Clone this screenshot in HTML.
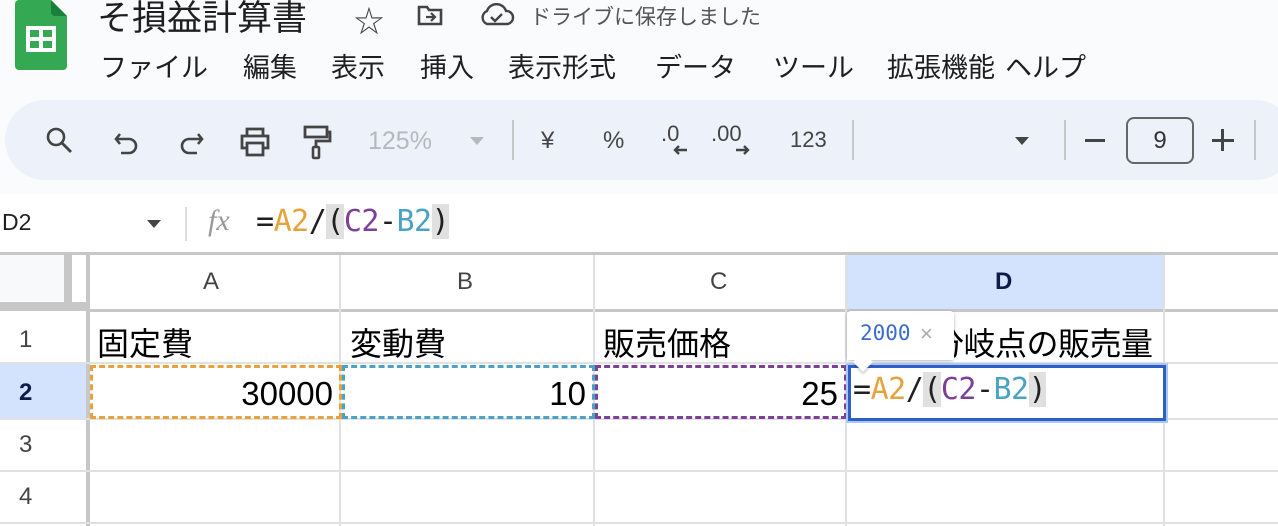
<!DOCTYPE html>
<html><head><meta charset="utf-8"><style>
*{margin:0;padding:0;box-sizing:border-box}
body{width:1278px;height:526px;overflow:hidden;background:#f9fbfd;font-family:"Liberation Sans","Noto Sans CJK JP",sans-serif;position:relative;color:#1f1f1f}
.a{position:absolute;white-space:nowrap}
.mono{font-family:"DejaVu Sans Mono","Liberation Mono",monospace}
.vl{position:absolute;background:#e1e1e1;width:2px}
.hl{position:absolute;background:#e1e1e1;height:2px}
.m{position:absolute;top:46px;font-size:27px;color:#1f1f1f}
.n{position:absolute;top:375px;font-size:33px;color:#000;text-align:right;width:240px}
</style></head><body>
<svg class="a" style="left:14px;top:0" width="54" height="72" viewBox="0 0 54 72">
<path d="M5 0H37L53 16V66a4 4 0 0 1-4 4H5a4 4 0 0 1-4-4V4a4 4 0 0 1 4-4z" fill="#34a853"/>
<path d="M37 0L53 16H41a4 4 0 0 1-4-4z" fill="#188038"/>
<rect x="14" y="28" width="26" height="22" fill="none" stroke="#fff" stroke-width="4"/>
<rect x="14" y="37" width="26" height="4" fill="#fff"/><rect x="25" y="28" width="4" height="22" fill="#fff"/>
</svg>
<div class="a" style="left:97px;top:-10px;font-size:35px;color:#1f1f1f">そ損益計算書</div>
<div class="a" style="left:354px;top:-3px;font-size:30px;color:#444">☆</div>
<svg class="a" style="left:416px;top:3px" width="28" height="24" viewBox="0 0 28 24"><path d="M3 4h8l2 3h12v14H3z" fill="none" stroke="#444" stroke-width="2.6"/><path d="M10 14h9M15 10l4 4-4 4" fill="none" stroke="#444" stroke-width="2.2"/></svg>
<svg class="a" style="left:478px;top:3px" width="38" height="24" viewBox="0 0 38 24"><path d="M9 21a7 7 0 0 1 0-13 10 10 0 0 1 19 0 6.5 6.5 0 0 1 1 13z" fill="none" stroke="#444" stroke-width="2.4"/><path d="M13 14l4 4 7-7" fill="none" stroke="#444" stroke-width="2.4"/></svg>
<div class="a" style="left:530px;top:1px;font-size:21px;color:#555">ドライブに保存しました</div>
<div class="m" style="left:100px">ファイル</div>
<div class="m" style="left:243px">編集</div>
<div class="m" style="left:331px">表示</div>
<div class="m" style="left:420px">挿入</div>
<div class="m" style="left:508px">表示形式</div>
<div class="m" style="left:655px">データ</div>
<div class="m" style="left:773px">ツール</div>
<div class="m" style="left:887px">拡張機能</div>
<div class="m" style="left:1005px">ヘルプ</div>
<div class="a" style="left:5px;top:100px;width:1290px;height:80px;background:#edf2fa;border-radius:40px"></div>
<svg class="a" style="left:44px;top:126px" width="32" height="30" viewBox="0 0 32 30"><circle cx="12" cy="11" r="8" fill="none" stroke="#444" stroke-width="2.6"/><path d="M18 17l9 9" stroke="#444" stroke-width="2.8"/></svg>
<svg class="a" style="left:114px;top:128px" width="28" height="30" viewBox="0 0 28 30"><path d="M6 6L2 11l4 5M2 11h13a7 7 0 0 1 0 14H7" fill="none" stroke="#444" stroke-width="2.6"/></svg>
<svg class="a" style="left:176px;top:128px" width="28" height="30" viewBox="0 0 28 30"><path d="M22 6l4 5-4 5M26 11H13a7 7 0 0 0 0 14h8" fill="none" stroke="#444" stroke-width="2.6"/></svg>
<svg class="a" style="left:238px;top:126px" width="34" height="32" viewBox="0 0 34 32"><path d="M9 10V3h16v7M9 22H4V10h26v12h-5M9 17h16v12H9z" fill="none" stroke="#444" stroke-width="2.8"/></svg>
<svg class="a" style="left:300px;top:124px" width="34" height="36" viewBox="0 0 34 36"><path d="M5 3h22v10H5zM27 8h3v9H16v6" fill="none" stroke="#444" stroke-width="2.8"/><rect x="13" y="23" width="6" height="11" rx="1" fill="none" stroke="#444" stroke-width="2.6"/></svg>
<div class="a" style="left:368px;top:127px;font-size:25px;color:#b5b8bc">125%</div>
<div class="a" style="left:470px;top:137px;border:7px solid transparent;border-top:8px solid #b5b8bc"></div>
<div class="a" style="left:512px;top:120px;width:2px;height:40px;background:#c7c7c7"></div>
<div class="a" style="left:541px;top:127px;font-size:24px;color:#444">¥</div>
<div class="a" style="left:603px;top:127px;font-size:24px;color:#444">%</div>
<div class="a" style="left:661px;top:121px;font-size:22px;color:#444">.0</div>
<svg class="a" style="left:672px;top:144px" width="16" height="12" viewBox="0 0 16 12"><path d="M15 6H3M7 2L3 6l4 4" fill="none" stroke="#444" stroke-width="2.4"/></svg>
<div class="a" style="left:711px;top:121px;font-size:22px;color:#444">.00</div>
<svg class="a" style="left:735px;top:144px" width="16" height="12" viewBox="0 0 16 12"><path d="M1 6h12M9 2l4 4-4 4" fill="none" stroke="#444" stroke-width="2.4"/></svg>
<div class="a" style="left:790px;top:127px;font-size:22px;color:#444">123</div>
<div class="a" style="left:852px;top:120px;width:2px;height:40px;background:#c7c7c7"></div>
<div class="a" style="left:1015px;top:137px;border:7px solid transparent;border-top:8px solid #444"></div>
<div class="a" style="left:1064px;top:120px;width:2px;height:40px;background:#c7c7c7"></div>
<div class="a" style="left:1085px;top:139px;width:20px;height:3px;background:#444"></div>
<div class="a" style="left:1126px;top:117px;width:68px;height:47px;border:2px solid #666;border-radius:8px;font-size:24px;text-align:center;line-height:43px;color:#333">9</div>
<div class="a" style="left:1212px;top:139px;width:22px;height:3px;background:#444"></div>
<div class="a" style="left:1221px;top:129px;width:3px;height:22px;background:#444"></div>
<div class="a" style="left:1254px;top:120px;width:2px;height:40px;background:#c7c7c7"></div>
<div class="a" style="left:0;top:194px;width:1278px;height:58px;background:#fff"></div>
<div class="a" style="left:2px;top:209px;font-size:23px">D2</div>
<div class="a" style="left:147px;top:220px;border:7px solid transparent;border-top:8px solid #444"></div>
<div class="a" style="left:185px;top:207px;width:2px;height:34px;background:#ddd"></div>
<div class="a" style="left:208px;top:204px;font-size:30px;color:#999;font-family:'Liberation Serif',serif;font-style:italic">fx</div>
<div class="a mono" style="left:256px;top:204px;font-size:30px;letter-spacing:-0.5px">=<span style="color:#e8a23c">A2</span>/<span style="background:#e0e0e0">(</span><span style="color:#7d3f98">C2</span>-<span style="color:#4aa3c5">B2</span><span style="background:#e0e0e0">)</span></div>
<div class="a" style="left:0;top:252px;width:1278px;height:274px;background:#fff"></div>
<div class="a" style="left:0;top:252px;width:1278px;height:3px;background:#c7c7c7"></div>
<div class="a" style="left:0;top:255px;width:64px;height:46px;background:#f8f9fa"></div>
<div class="a" style="left:0;top:302px;width:88px;height:9px;background:#c7c7c7"></div>
<div class="a" style="left:64px;top:255px;width:8px;height:47px;background:#c7c7c7"></div>
<div class="a" style="left:846px;top:255px;width:318px;height:56px;background:#d3e3fd"></div>
<div class="a" style="left:0;top:364px;width:86px;height:55px;background:#d3e3fd"></div>
<div class="a" style="left:86px;top:255px;width:4px;height:271px;background:#c7c7c7"></div>
<div class="hl" style="left:90px;top:309px;width:1188px;height:3px;background:#c7c7c7"></div>
<div class="hl" style="left:0;top:362px;width:1278px"></div>
<div class="hl" style="left:0;top:418px;width:1278px"></div>
<div class="hl" style="left:0;top:470px;width:1278px"></div>
<div class="hl" style="left:0;top:522px;width:1278px"></div>
<div class="vl" style="left:339px;top:255px;height:271px"></div>
<div class="vl" style="left:593px;top:255px;height:271px"></div>
<div class="vl" style="left:845px;top:255px;height:271px"></div>
<div class="vl" style="left:1163px;top:255px;height:271px"></div>
<div class="a" style="left:203px;top:268px;font-size:24px;color:#444">A</div>
<div class="a" style="left:457px;top:268px;font-size:24px;color:#444">B</div>
<div class="a" style="left:710px;top:268px;font-size:24px;color:#444">C</div>
<div class="a" style="left:995px;top:268px;font-size:24px;color:#0b1e4a;font-weight:bold">D</div>
<div class="a" style="left:19px;top:326px;font-size:24px;color:#444">1</div>
<div class="a" style="left:19px;top:379px;font-size:24px;color:#0b1e4a;font-weight:bold">2</div>
<div class="a" style="left:19px;top:431px;font-size:24px;color:#444">3</div>
<div class="a" style="left:19px;top:483px;font-size:24px;color:#444">4</div>
<div class="a" style="left:97px;top:319px;font-size:32px;color:#000">固定費</div>
<div class="a" style="left:350px;top:319px;font-size:32px;color:#000">変動費</div>
<div class="a" style="left:603px;top:319px;font-size:32px;color:#000">販売価格</div>
<div class="a" style="left:869px;top:319px;font-size:32px;color:#000;letter-spacing:-0.5px">損益分岐点の販売量</div>
<div class="a" style="left:90px;top:365px;width:252px;height:54px;border:3px dashed #e8a23c"></div>
<div class="a" style="left:342px;top:365px;width:253px;height:54px;border:3px dashed #4aa3c5"></div>
<div class="a" style="left:595px;top:365px;width:252px;height:54px;border:3px dashed #7d3f98"></div>
<div class="n" style="left:93px">30000</div>
<div class="n" style="left:346px">10</div>
<div class="n" style="left:598px">25</div>
<div class="a" style="left:846px;top:363px;width:322px;height:60px;border:3px solid #a8c7fa"></div>
<div class="a" style="left:848px;top:365px;width:318px;height:56px;border:3px solid #2e5ec6;background:#fff"></div>
<div class="a mono" style="left:853px;top:372px;font-size:30px;letter-spacing:-0.5px">=<span style="color:#e8a23c">A2</span>/<span style="background:#e0e0e0">(</span><span style="color:#7d3f98">C2</span>-<span style="color:#4aa3c5">B2</span><span style="background:#e0e0e0">)</span></div>
<div class="a" style="left:847px;top:311px;width:107px;height:49px;background:#fff;border-radius:4px;box-shadow:0 1px 3px rgba(0,0,0,.3)"></div>
<div class="a" style="left:856px;top:355px;width:14px;height:14px;background:#fff;transform:rotate(45deg);box-shadow:2px 2px 2px rgba(0,0,0,.15)"></div>
<div class="a" style="left:847px;top:340px;width:107px;height:20px;background:#fff"></div>
<div class="a mono" style="left:860px;top:321px;font-size:21px;color:#3b6ccc">2000</div>
<div class="a" style="left:920px;top:321px;font-size:22px;color:#aaa">×</div>
</body></html>
